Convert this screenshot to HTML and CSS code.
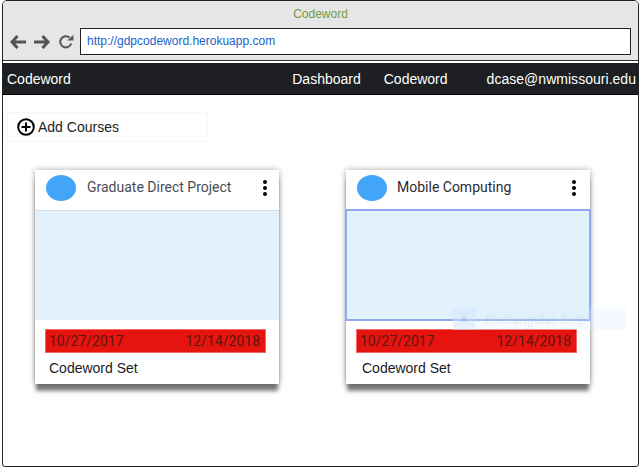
FILE: index.html
```html
<!DOCTYPE html>
<html lang="en">
<head>
<meta charset="utf-8">
<title>Codeword</title>
<link rel="stylesheet" href="styles.css">
</head>
<body>
<div class="window">
  <header class="chrome">
    <div class="chrome-title">Codeword</div>
    <div class="chrome-bar">
      <svg class="ic-arrow" viewBox="0 0 16 14"><path d="M7.5 1 2 7l5.5 6M2.5 7H16" fill="none" stroke="#555" stroke-width="3"/></svg>
      <svg class="ic-arrow" viewBox="0 0 16 14"><path d="M8.5 1 14 7l-5.5 6M13.5 7H0" fill="none" stroke="#555" stroke-width="3"/></svg>
      <svg class="ic-reload" viewBox="0 0 16 16"><path d="M13.2 9.5A5.6 5.6 0 1 1 11.6 3.6" fill="none" stroke="#555" stroke-width="2"/><path d="M9.2 6.6h6.3l-.2-5.6z" fill="#555"/></svg>
      <div class="url">http://gdpcodeword.herokuapp.com</div>
    </div>
  </header>
  <nav class="nav">
    <span class="brand">Codeword</span>
    <div class="nav-links">
      <span>Dashboard</span>
      <span>Codeword</span>
      <span>dcase@nwmissouri.edu</span>
    </div>
  </nav>
  <main class="content">
    <div class="add">
      <svg class="ic-add" viewBox="0 0 18 18"><circle cx="9" cy="9" r="7.8" fill="none" stroke="#000" stroke-width="2"/><path d="M9 4.5v9M4.5 9h9" stroke="#000" stroke-width="2"/></svg>
      <span>Add Courses</span>
    </div>
    <div class="cards">
      <article class="card">
        <div class="card-head">
          <span class="avatar"></span>
          <span class="card-title muted">Graduate Direct Project</span>
          <span class="dots"><i></i><i></i><i></i></span>
        </div>
        <div class="media"></div>
        <div class="dates"><span>10/27/2017</span><span>12/14/2018</span></div>
        <div class="set">Codeword Set</div>
      </article>
      <article class="card card-alt">
        <div class="card-head">
          <span class="avatar"></span>
          <span class="card-title">Mobile Computing</span>
          <span class="dots"><i></i><i></i><i></i></span>
        </div>
        <div class="media selected"></div>
        <div class="dates"><span>10/27/2017</span><span>12/14/2018</span></div>
        <div class="set">Codeword Set</div>
      </article>
    </div>
    <div class="snip"><span class="snip-icon"><i></i></span><span>Rectangular Snip</span></div>
  </main>
</div>
</body>
</html>
```

FILE: styles.css
```css
* { box-sizing: border-box; }
html, body { margin: 0; padding: 0; background: #fff; }
body { width: 641px; height: 469px; overflow: hidden; font-family: "Liberation Sans", Arial, sans-serif; }

.window {
  position: relative;
  margin-left: 2px;
  width: 637px;
  height: 467px;
  border: 1px solid #222;
  border-radius: 5px 5px 3px 3px;
  overflow: hidden;
  display: flex;
  flex-direction: column;
}

.chrome { height: 60px; background: #e6e6e6; border-bottom: 1px solid #333; flex: none; }
.chrome-title { height: 27px; padding-top: 6px; text-align: center; font-size: 12px; line-height: 15px; color: #6f9a45; }
.chrome-bar { display: flex; align-items: center; height: 27px; padding-left: 7px; }
.ic-arrow { width: 16px; height: 14px; margin-right: 8px; flex: none; }
.ic-reload { width: 16px; height: 16px; margin-right: 6px; flex: none; }
.url {
  width: 551px;
  height: 27px;
  background: #fff;
  border: 1px solid #222;
  padding-left: 6px;
  font-size: 12px;
  line-height: 24px;
  color: #1a62c9;
}

.nav {
  flex: none;
  margin-top: 2px;
  height: 32px;
  background: #1d1f22;
  border-bottom: 1px solid #000;
  display: flex;
  align-items: center;
  justify-content: space-between;
  padding: 0 2px 0 4px;
  color: #fff;
  font-size: 14px;
}
.nav-links { display: flex; gap: 23px; }
.nav-links span:last-child { margin-left: 16px; letter-spacing: .03px; }

.content { flex: 1; position: relative; padding: 17px 0 0 4px; }
.add {
  display: flex;
  align-items: center;
  width: 201px;
  height: 30px;
  padding-left: 9px;
  gap: 3px;
  border: 1px solid #f8f8f8;
  font-size: 14px;
  color: #222;
}
.ic-add { width: 18px; height: 18px; flex: none; }

.cards { display: flex; gap: 67px; margin: 28px 0 0 28px; }
.card {
  width: 244px;
  height: 214px;
  background: #fff;
  box-shadow: 0 0 6px rgba(0,0,0,.35), 0 8px 4px -1px rgba(0,0,0,.5);
  display: flex;
  flex-direction: column;
  font-family: Roboto, "Liberation Sans", sans-serif;
}
.card-head { height: 40px; display: flex; align-items: center; padding: 0 11px 4px; flex: none; }
.avatar { width: 30px; height: 26px; border-radius: 50%; background: #42a5f8; flex: none; }
.card-title { margin-left: 11px; padding-bottom: 2px; font-size: 14px; color: #2b2b33; flex: 1; }
.card-title.muted { color: #4a4d57; }
.card-alt .card-title { margin-left: 10px; }
.dots { display: flex; flex-direction: column; gap: 2px; width: 4px; margin-right: 1px; }
.card-alt .dots { margin-right: 3px; }
.dots i { width: 4px; height: 4px; border-radius: 50%; background: #000; display: block; }
.media { height: 110px; background: #e3f1fc; border-top: 1px solid #d3dde5; flex: none; }
.media.selected { outline: 2px solid #8fa9ec; outline-offset: -1px; border-top: 0; }
.dates {
  margin: 9px 13px 0 10px;
  height: 24px;
  background: #e5140f;
  border: 1px solid #f26a66;
  display: flex;
  justify-content: space-between;
  align-items: center;
  padding: 0 5px 0 3px;
  font-size: 14px;
  color: #5c1512;
}
.set { margin: 7px 0 0 14px; font-family: "Liberation Sans", Arial, sans-serif; font-size: 14px; line-height: 16px; color: #1b1b1f; }
.card-alt .set { margin-left: 16px; }

.snip {
  position: absolute;
  left: 450px;
  top: 213px;
  width: 173px;
  height: 22px;
  display: flex;
  align-items: center;
  background: rgba(220,238,255,.3);
  font-family: Roboto, sans-serif;
  font-size: 13px;
  letter-spacing: .2px;
  color: rgba(90,110,130,.1);
}
.snip-icon { width: 22px; height: 22px; margin-right: 10px; background: rgba(200,228,255,.3); display: flex; align-items: center; justify-content: center; }
.snip-icon i { width: 6px; height: 6px; border-radius: 50%; background: rgba(120,150,190,.2); display: block; }
```
